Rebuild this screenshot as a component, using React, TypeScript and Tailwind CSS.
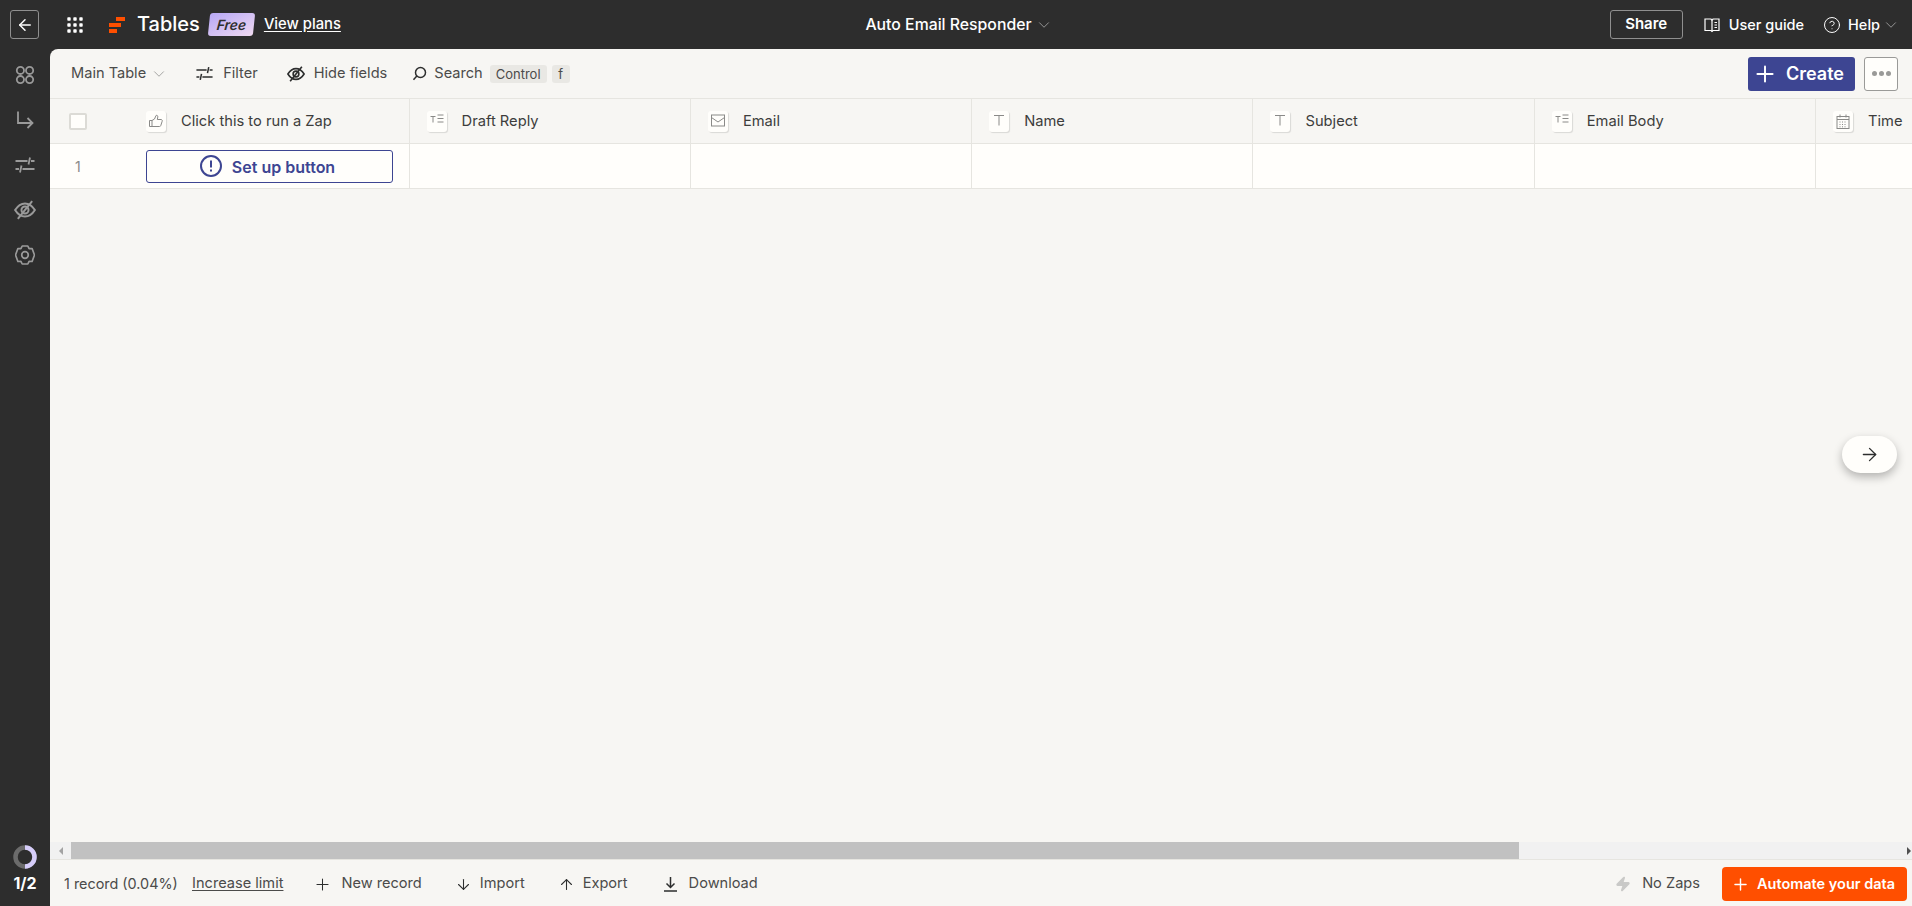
import React from "react";
import { ArrowLeft, ArrowRight, ArrowDown, ArrowUp, Plus, ChevronDown, CircleHelp, Zap } from "lucide-react";

type ColumnType = {
  id: string;
  name: string;
  icon: "button" | "longtext" | "email" | "text" | "date";
};

const columns: ColumnType[] = [
  { id: "draft", name: "Draft Reply", icon: "longtext" },
  { id: "email", name: "Email", icon: "email" },
  { id: "name", name: "Name", icon: "text" },
  { id: "subject", name: "Subject", icon: "text" },
  { id: "body", name: "Email Body", icon: "longtext" },
  { id: "time", name: "Time", icon: "date" },
];

const GridDots = () => (
  <svg width="16" height="16" viewBox="0 0 16 16" fill="#fff">
    {[2, 8, 14].map((y) =>
      [2, 8, 14].map((x) => <rect key={`${x}-${y}`} x={x - 1.7} y={y - 1.7} width="3.4" height="3.4" rx="0.8" />)
    )}
  </svg>
);

const Logo = () => (
  <svg width="16" height="16" viewBox="0 0 16 16" fill="#ff4f00">
    <rect x="7" y="0" width="9" height="4" />
    <rect x="0" y="6" width="12" height="4" />
    <rect x="0" y="12" width="8" height="4" />
  </svg>
);

const AppsIcon = () => (
  <svg width="20" height="20" viewBox="0 0 20 20" fill="none" stroke="#9a9a9a" strokeWidth="1.8">
    <circle cx="5.4" cy="5.4" r="3.6" />
    <circle cx="14.6" cy="5.4" r="3.6" />
    <circle cx="5.4" cy="14.6" r="3.6" />
    <circle cx="14.6" cy="14.6" r="3.6" />
  </svg>
);

const ReturnIcon = () => (
  <svg width="20" height="20" viewBox="0 0 20 20" fill="none" stroke="#9a9a9a" strokeWidth="1.8">
    <path d="M3 1.500v11.500h14.500" />
    <path d="M12.500 8l5 5-5 5" />
  </svg>
);

const SlidersIcon = ({ color = "#9a9a9a", size = 20 }: { color?: string; size?: number }) => (
  <svg width={size} height={size} viewBox="0 0 20 20" fill="none" stroke={color} strokeWidth="1.8">
    <path d="M.5 6h12M16 6h3.500M15 2.500l-1.500 7" />
    <path d="M.5 14h3.500M7.500 14h12M6.500 10.500l-1.500 7" />
  </svg>
);

const EyeOffIcon = ({ color = "#9a9a9a", size = 20 }: { color?: string; size?: number }) => (
  <svg width={size} height={size} viewBox="0 0 20 20" fill="none" stroke={color} strokeWidth="1.8">
    <path d="M1 10c2.500-4 5.500-6 9-6s6.500 2 9 6c-2.500 4-5.500 6-9 6s-6.500-2-9-6z" />
    <circle cx="10" cy="10" r="3.200" />
    <path d="M16.500 2L3.500 18" />
  </svg>
);

const GearIcon = () => (
  <svg width="20" height="20" viewBox="0 0 20 20" fill="none" stroke="#9a9a9a" strokeWidth="1.700" strokeLinejoin="round">
    <path d="M7.200 1h5.600l1.300 2.700 3-.2L19.500 10l-2.400 6.500-3-.2-1.300 2.700H7.200l-1.300-2.700-3 .2L.5 10l2.400-6.500 3 .2z" />
    <circle cx="10" cy="10" r="3.300" />
  </svg>
);

const SearchIcon = () => (
  <svg width="15" height="15" viewBox="0 0 15 15" fill="none" stroke="#2d2e2e" strokeWidth="1.500">
    <circle cx="8.500" cy="6.500" r="5" />
    <path d="M4.800 10L1.500 13.800" />
  </svg>
);

const BookIcon = () => (
  <svg width="16" height="16" viewBox="0 0 16 16" fill="none" stroke="#fff" strokeWidth="1.200">
    <path d="M1 2h6l1 1.200L9 2h6v11.500H9l-1 1-1-1H1z" />
    <path d="M8 3.200v11M10.500 5.500h2.500M10.500 8h2.500M10.500 10.500h2.500" />
  </svg>
);

const DownloadIcon = () => (
  <svg width="13" height="16" viewBox="0 0 13 16" fill="none" stroke="#2d2e2e" strokeWidth="1.500">
    <path d="M6.500 1v10M2.500 7.500l4 4 4-4M0 15h13" />
  </svg>
);

const ThumbIcon = () => (
  <svg width="14" height="14" viewBox="0 0 14 14" fill="none" stroke="#8a8a88" strokeWidth="1">
    <path d="M.500 6.500h2.500v6H.500zM3 6.500l2.500-1.500L7 1.500c1-.5 2 .2 1.800 1.500L8.300 5.500h3.700c1 0 1.500.8 1.200 1.700l-1.400 4.300c-.2.600-.6 1-1.300 1H3" />
  </svg>
);

const LongTextIcon = () => (
  <svg width="14" height="12" viewBox="0 0 14 12" fill="none" stroke="#8a8a88" strokeWidth="1">
    <path d="M.500 2.500h5M3 2.500v6M7.500 1h6M7.500 4.500h6M7.500 8h6" />
  </svg>
);

const EmailIcon = () => (
  <svg width="14" height="13" viewBox="0 0 14 13" fill="none" stroke="#8a8a88" strokeWidth="1">
    <rect x=".5" y="1" width="13" height="11" />
    <path d="M.5 3.500L7 8l6.500-4.500" />
  </svg>
);

const TextIcon = () => (
  <svg width="12" height="12" viewBox="0 0 12 12" fill="none" stroke="#8a8a88" strokeWidth="1">
    <path d="M1 1.500h10M6 1.500v10" />
  </svg>
);

const DateIcon = () => (
  <svg width="14" height="15" viewBox="0 0 14 15" fill="none" stroke="#8a8a88" strokeWidth="1">
    <rect x="1" y="2.500" width="12" height="12" />
    <path d="M1 5.500h12M4 .5v3M10 .5v3" />
    <path d="M3.500 8h7M3.500 10.500h7M3.500 12.800h7" strokeDasharray="1 1.500" />
  </svg>
);

const FieldIcon = ({ icon }: { icon: ColumnType["icon"] }) => (
  <span className="flex h-[21px] w-5 shrink-0 items-start justify-center rounded-[3px] bg-[#fffefb] pt-[3px] shadow-[1px_1px_1px_rgba(0,0,0,0.12)]">
    {icon === "button" && <ThumbIcon />}
    {icon === "longtext" && <LongTextIcon />}
    {icon === "email" && <EmailIcon />}
    {icon === "text" && <TextIcon />}
    {icon === "date" && <DateIcon />}
  </span>
);

const TopBar = () => (
  <header className="grid h-[49px] shrink-0 grid-cols-[1fr_auto_1fr] items-center pl-[10px] pr-[12px] text-white">
    <div className="flex items-center">
      <button className="flex h-[29px] w-[29px] items-center justify-center rounded-[3px] border border-[#8f8f8f]">
        <ArrowLeft size={18} strokeWidth={2} />
      </button>
      <span className="ml-7">
        <GridDots />
      </span>
      <span className="ml-[26px]">
        <Logo />
      </span>
      <span className="ml-[12px] pb-[2px] text-[20px] font-medium">Tables</span>
      <span className="ml-[9px] flex h-[23px] w-[45px] -skew-x-6 items-center justify-center rounded-[3px] bg-gradient-to-br from-[#b7a7f5] to-[#f0d9f0] text-[14px] font-semibold italic text-[#2d2e2e]">
        Free
      </span>
      <a className="ml-[10px] text-[14.8px] font-medium underline underline-offset-2">View plans</a>
    </div>
    <div className="ml-2 flex items-center gap-[3px]">
      <span className="text-[15.800px] font-medium">Auto Email Responder</span>
      <ChevronDown size={18} strokeWidth={1} className="text-[#b5b5b5]" />
    </div>
    <div className="flex items-center justify-end">
      <button className="h-[29px] w-[73px] rounded-[3px] border border-[#8f8f8f] text-[15px] font-semibold">Share</button>
      <span className="ml-[21px]">
        <BookIcon />
      </span>
      <span className="ml-[9px] text-[14.5px] font-medium">User guide</span>
      <CircleHelp size={18} strokeWidth={1.300} className="ml-[19px]" />
      <span className="ml-[7px] text-[14.5px] font-medium">Help</span>
      <ChevronDown size={18} strokeWidth={1} className="ml-[2px] text-[#b5b5b5]" />
    </div>
  </header>
);

const Sidebar = () => (
  <aside className="flex w-[50px] shrink-0 flex-col items-center">
    <div className="mt-4 flex flex-col items-center gap-[25px]">
      <AppsIcon />
      <ReturnIcon />
      <SlidersIcon />
      <span className="flex h-5 w-5 items-center justify-center">
        <span className="shrink-0">
          <EyeOffIcon size={22} />
        </span>
      </span>
      <GearIcon />
    </div>
    <div className="mb-[15px] mt-auto flex flex-col items-center gap-[6px]">
      <svg width="24" height="24" viewBox="0 0 24 24" fill="none" strokeWidth="4.500">
        <circle cx="12" cy="12" r="9.500" stroke="#6b6b6b" />
        <path d="M12 2.500a9.500 9.500 0 0 1 0 19" stroke="#d6cdfa" />
      </svg>
      <span className="text-[16px] font-bold leading-none text-white">1/2</span>
    </div>
  </aside>
);

const Toolbar = () => (
  <div className="flex h-[49px] shrink-0 items-center pl-[21px] pr-[14px] text-[14.6px] text-[#4b4b4a]">
    <div className="flex items-center pt-[1px]">
      <span>Main Table</span>
      <ChevronDown size={18} strokeWidth={1} className="ml-1 text-[#8a8a88]" />
      <span className="ml-[28px]">
        <SlidersIcon color="#2d2e2e" size={17} />
      </span>
      <span className="ml-[10px]">Filter</span>
      <span className="ml-[29px]">
        <EyeOffIcon color="#2d2e2e" size={18} />
      </span>
      <span className="ml-[9px]">Hide fields</span>
      <span className="ml-[25px]">
        <SearchIcon />
      </span>
      <span className="ml-[7px]">Search</span>
      <span className="ml-[7px] rounded-[3px] bg-[#e9e8e4] px-[6px] text-[13px] leading-[18px]">Control</span>
      <span className="ml-[5px] w-[18px] rounded-[3px] bg-[#e9e8e4] text-center text-[13px] leading-[18px]">f</span>
    </div>
    <button className="ml-auto flex h-[34px] w-[107px] items-center gap-2 rounded-[3px] bg-[#3d4592] pl-1 text-[18px] font-semibold text-white">
      <Plus size={26} strokeWidth={1.800} />
      Create
    </button>
    <button className="ml-[9px] flex h-[34px] w-[34px] items-center justify-center gap-[2px] rounded-[3px] border border-[#9a9a98] bg-[#fffefb]">
      <span className="h-[5px] w-[5px] rounded-full bg-[#9a9a98]" />
      <span className="h-[5px] w-[5px] rounded-full bg-[#9a9a98]" />
      <span className="h-[5px] w-[5px] rounded-full bg-[#9a9a98]" />
    </button>
  </div>
);

const Table = () => (
  <div className="min-h-0 flex-1 overflow-hidden border-t border-[#e6e5e0]">
    <div className="flex h-[45px] border-b border-[#e6e5e0] text-[14.7px] text-[#3d3d3c]">
      <div className="flex w-[359.6px] shrink-0 items-center border-r border-[#e6e5e0]">
        <span className="ml-[19px] h-[17px] w-[18px] rounded-[2px] border-2 border-[#dcdbd6] bg-[#fffefb]" />
        <span className="ml-[59px]">
          <FieldIcon icon="button" />
        </span>
        <span className="ml-[15px] pt-[1px]">Click this to run a Zap</span>
      </div>
      {columns.map((column) => (
        <div key={column.id} className="flex w-[281.3px] shrink-0 items-center gap-[15px] border-r border-[#e6e5e0] pl-[17px]">
          <FieldIcon icon={column.icon} />
          <span className="pt-[1px]">{column.name}</span>
        </div>
      ))}
    </div>
    <div className="flex h-[45px] border-b border-[#e6e5e0] bg-[#fffefb]">
      <div className="flex w-[359.6px] shrink-0 items-center border-r border-[#e6e5e0]">
        <span className="ml-[25px] w-[71px] text-[14px] text-[#8a8a88]">1</span>
        <button className="flex h-[33px] w-[247px] items-center justify-center gap-[10px] rounded-[3px] border border-[#3d4592] pr-[4px] text-[16px] font-semibold text-[#3d4592]">
          <svg width="22" height="22" viewBox="0 0 22 22" fill="none" stroke="#3d4592" strokeWidth="2">
            <circle cx="11" cy="11" r="10" />
            <path d="M11 5.500v7M11 14.500v2" />
          </svg>
          <span className="pt-[1px]">Set up button</span>
        </button>
      </div>
      {columns.map((column) => (
        <div key={column.id} className="w-[281.3px] shrink-0 border-r border-[#e6e5e0]" />
      ))}
    </div>
  </div>
);

const ScrollBar = () => (
  <div className="flex h-[18px] shrink-0 items-center border-b border-[#e6e5e0] bg-[#f1f1f1]">
    <div className="flex w-[21px] justify-center">
      <span className="h-0 w-0 border-y-[4px] border-r-[4px] border-y-transparent border-r-[#a3a3a3]" />
    </div>
    <div className="h-full w-[1448px] bg-[#c1c1c1]" />
    <div className="ml-auto mr-[1px] flex w-[12px] justify-end">
      <span className="h-0 w-0 border-y-[4px] border-l-[4px] border-y-transparent border-l-[#505050]" />
    </div>
  </div>
);

const Footer = () => (
  <footer className="flex h-[46px] shrink-0 items-center pl-[14px] pr-[5px] pt-[2px] text-[14.6px] text-[#4b4b4a]">
    <span className="w-[113px] whitespace-nowrap text-[14.4px]">1 record (0.04%)</span>
    <a className="ml-[15px] underline underline-offset-2">Increase limit</a>
    <Plus size={19} strokeWidth={1.300} className="ml-[30px] text-[#2d2e2e]" />
    <span className="ml-[9px]">New record</span>
    <ArrowDown size={17} strokeWidth={1.500} className="ml-[33px] text-[#2d2e2e]" />
    <span className="ml-2">Import</span>
    <ArrowUp size={17} strokeWidth={1.500} className="ml-[33px] text-[#2d2e2e]" />
    <span className="ml-2">Export</span>
    <span className="ml-[36px]">
      <DownloadIcon />
    </span>
    <span className="ml-3">Download</span>
    <Zap size={16} fill="#c9c9c7" stroke="#c9c9c7" className="ml-auto" />
    <span className="ml-[11px]">No Zaps</span>
    <button className="ml-[22px] flex h-[34px] w-[185px] items-center gap-[7px] rounded-[4px] bg-[#ff4f00] pl-[9px] text-[14.5px] font-semibold text-white">
      <Plus size={19} strokeWidth={1.800} />
      Automate your data
    </button>
  </footer>
);

export default function App() {
  return (
    <div className="flex h-screen flex-col overflow-hidden bg-[#2d2d2d] font-['Inter',sans-serif]">
      <TopBar />
      <div className="flex min-h-0 flex-1">
        <Sidebar />
        <main className="relative flex min-w-0 flex-1 flex-col rounded-tl-[8px] bg-[#f7f6f3]">
          <Toolbar />
          <Table />
          <ScrollBar />
          <Footer />
          <button className="absolute right-[15px] top-[387px] flex h-[37px] w-[55px] items-center justify-center rounded-full bg-[#fffefb] text-[#2d2e2e] shadow-[0_4px_10px_rgba(0,0,0,0.28)]">
            <ArrowRight size={21} strokeWidth={1.500} />
          </button>
        </main>
      </div>
    </div>
  );
}
